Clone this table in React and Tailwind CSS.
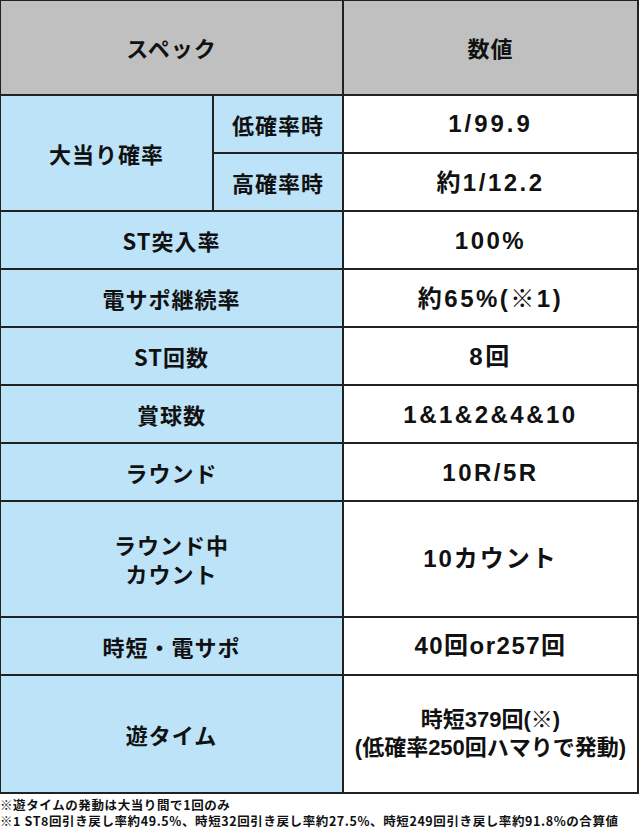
import React from "react";

const jp = { fontFamily: '"Noto Sans CJK JP", sans-serif' };
const num = { fontFamily: '"Liberation Sans", "Noto Sans CJK JP", sans-serif' };

function L({ children, className = "" }) {
  return (
    <div
      className={`bg-[#bce3f8] flex items-center justify-center text-center font-bold text-[22px] tracking-[1px] leading-[29px] text-[#111] ${className}`}
      style={jp}
    >
      {children}
    </div>
  );
}

function R({ children, className = "text-[24px] leading-[27px] tracking-[2.5px]" }) {
  return (
    <div
      className={`bg-white flex items-center justify-center text-center font-bold text-[#111] whitespace-nowrap ${className}`}
      style={num}
    >
      {children}
    </div>
  );
}

export default function App() {
  const rows = [
    ["ST突入率", "100%"],
    ["電サポ継続率", "約65%(※1)"],
    ["ST回数", "8回"],
    ["賞球数", "1&1&2&4&10"],
    ["ラウンド", "10R/5R"],
  ];
  return (
    <div className="w-[640px] bg-white">
      <div className="w-[639px] grid grid-cols-[211px_128px_293px] grid-rows-[93px_56px_56px_56px_56px_56px_56px_56px_114px_56px_116px] gap-[2px] bg-[#222] pt-[1px] pl-[1px] pr-[2px] pb-[2px]">
        <div
          className="col-span-2 bg-[#c0c0c0] flex items-center justify-center font-bold text-[22px] tracking-[1px] text-[#111]"
          style={jp}
        >
          スペック
        </div>
        <div
          className="bg-[#c0c0c0] flex items-center justify-center font-bold text-[22px] tracking-[1px] text-[#111]"
          style={jp}
        >
          数値
        </div>

        <L className="row-span-2">大当り確率</L>
        <L>低確率時</L>
        <R className="text-[24px] tracking-[3px]">1/99.9</R>
        <L>高確率時</L>
        <R>約1/12.2</R>

        {rows.map(([a, b]) => (
          <React.Fragment key={a}>
            <L className="col-span-2">{a}</L>
            <R>{b}</R>
          </React.Fragment>
        ))}

        <L className="col-span-2">
          <span>
            ラウンド中
            <br />
            カウント
          </span>
        </L>
        <R className="text-[24px] tracking-[2px]">10カウント</R>

        <L className="col-span-2">時短・電サポ</L>
        <R className="text-[24px] tracking-[1.5px]">40回or257回</R>

        <L className="col-span-2">遊タイム</L>
        <R className="text-[22px] tracking-[0px] leading-[28px]">
          <span>
            時短379回(※)
            <br />
            (低確率250回ハマりで発動)
          </span>
        </R>
      </div>
      <div
        className="pt-[3px] text-[12.5px] leading-[16px] font-bold text-[#111] tracking-[0.6px] whitespace-nowrap"
        style={jp}
      >
        <div>※遊タイムの発動は大当り間で1回のみ</div>
        <div>
          ※1 ST8回引き戻し率約49.5%、時短32回引き戻し率約27.5%、時短249回引き戻し率約91.8%の合算値
        </div>
      </div>
    </div>
  );
}
